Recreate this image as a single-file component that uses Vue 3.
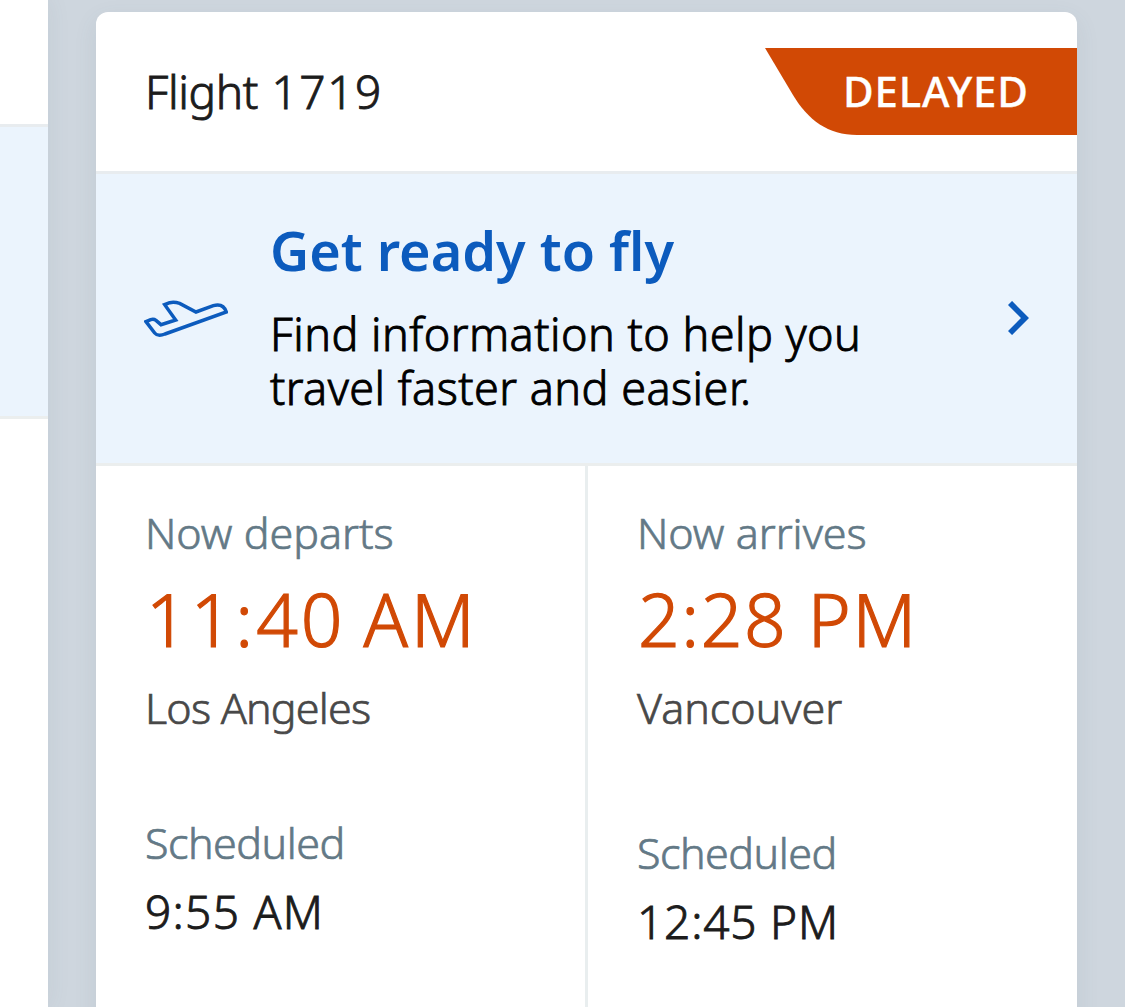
<script setup>
const flight = {
  number: '1719',
  status: 'DELAYED',
}

const legs = [
  { key: 'dep', label: 'Now departs', time: '11:40 AM', city: 'Los Angeles', scheduled: '9:55 AM' },
  { key: 'arr', label: 'Now arrives', time: '2:28 PM', city: 'Vancouver', scheduled: '12:45 PM' },
]
</script>

<template>
  <div class="screen">
    <!-- edge of the previous card -->
    <div class="prev-card">
      <div class="prev-head"></div>
      <div class="prev-banner"></div>
    </div>

    <div class="card">
      <div class="card-head">
        <div class="flight">Flight <span class="number">{{ flight.number }}</span></div>
        <div class="badge"><span>{{ flight.status }}</span></div>
      </div>

      <div class="banner">
        <svg class="plane" viewBox="42 60 252 114">
          <path d="M48 125L62 119Q71 116 78 121L93 134L137 120L104 74L119 68Q133 65 149 70L198 96L250 77Q280 69 289 96L105 162Q84 171 74 159Z" />
        </svg>
        <div class="banner-text">
          <div class="title">Get ready to fly</div>
          <div class="desc">Find information to help you<br>travel faster and easier.</div>
        </div>
        <svg class="chevron" viewBox="0 0 21 34">
          <path d="M2 2L17 17L2 32" />
        </svg>
      </div>

      <div class="legs">
        <div v-for="leg in legs" :key="leg.key" class="leg" :class="leg.key">
          <div class="label">{{ leg.label }}</div>
          <div class="time">{{ leg.time }}</div>
          <div class="city">{{ leg.city }}</div>
          <div class="label sched">Scheduled</div>
          <div class="value">{{ leg.scheduled }}</div>
        </div>
      </div>
    </div>
  </div>
</template>

<style>
body { margin:0; overflow:hidden; }
</style>

<style scoped>
.screen {
  display:flex; width:1125px; height:1007px; overflow:hidden; box-sizing:border-box;
  background:#ced6de; font-family:"Noto Sans", "Open Sans", sans-serif; font-weight:300;
  white-space:nowrap;
}

.prev-card { flex:none; width:48px; height:1007px; background:#fff; box-shadow:0 0 24px rgba(80,100,110,.08); }
.prev-head { height:124px; border-bottom:3px solid #e8ecef; }
.prev-banner { height:289px; background:#ebf4fd; border-bottom:3px solid #ebeeee; }

.card {
  flex:none; width:981px; height:1040px; margin:12px 0 0 48px; background:#fff;
  border-radius:12px 12px 0 0; box-shadow:0 8px 24px rgba(80,100,110,.09); overflow:hidden;
}
.card-head {
  display:flex; justify-content:space-between; height:159px; padding-left:49px;
  border-bottom:3px solid #e8ecef;
}

/* light weight is too thin at this size, so the outline is thickened a bit */
.flight, .desc, .value { -webkit-text-stroke:.9px currentColor; }
.label, .city { -webkit-text-stroke:.7px currentColor; }
.time { -webkit-text-stroke:1.2px currentColor; }

.flight { font-size:46px; line-height:62px; margin-top:48px; color:#1c1c1c; letter-spacing:-.4px; }
.number { margin-left:2px; letter-spacing:1.6px; }

.badge {
  width:312px; height:87px; margin-top:36px; background:#d14905; color:#fff;
  clip-path:path("M0 0H312V87H92C63 87 43 72 28 47Z");
}
.badge span {
  display:block; padding-left:78px; font-size:42px; line-height:85px; font-weight:500;
  letter-spacing:.8px; -webkit-text-stroke:.3px currentColor;
}

.banner {
  display:flex; height:289px; background:#ebf4fd; border-bottom:3px solid #ebeeee;
}
.plane { flex:none; width:84px; height:38px; margin:126px 0 0 48px; }
.plane path { fill:none; stroke:#0c5bbd; stroke-width:10.5; }
.banner-text { flex:1; padding:40px 0 0 42px; }
.title { font-size:54px; line-height:72px; font-weight:600; color:#0c5bbd; }
.desc { margin-top:21px; font-size:45px; line-height:54px; color:#000; letter-spacing:.47px; }
.chevron { flex:none; width:21px; height:34px; margin:127px 48px 0 0; }
.chevron path { fill:none; stroke:#0c5bbd; stroke-width:5.8; }

.legs { display:flex; height:600px; }
.leg { flex:1; padding:38px 0 0 49px; }
.leg + .leg { border-left:3px solid #e9eeef; }
.label { font-size:43px; line-height:58px; color:#637986; }
.time { margin-top:7px; padding-left:1px; font-size:73px; line-height:100px; color:#d14905; }
.city { margin-top:10px; font-size:43px; line-height:58px; color:#484848; }
.sched { margin-top:77px; letter-spacing:-.5px; }
.arr .sched { margin-top:87px; }
.value { margin-top:8px; font-size:46px; line-height:62px; color:#1c1c1c; }

.dep .time { letter-spacing:3px; word-spacing:-4px; }
.arr .time { letter-spacing:1.6px; }
.dep .city { letter-spacing:-.8px; }
.dep .value { letter-spacing:1.3px; }
.arr .value { letter-spacing:.8px; }
</style>
